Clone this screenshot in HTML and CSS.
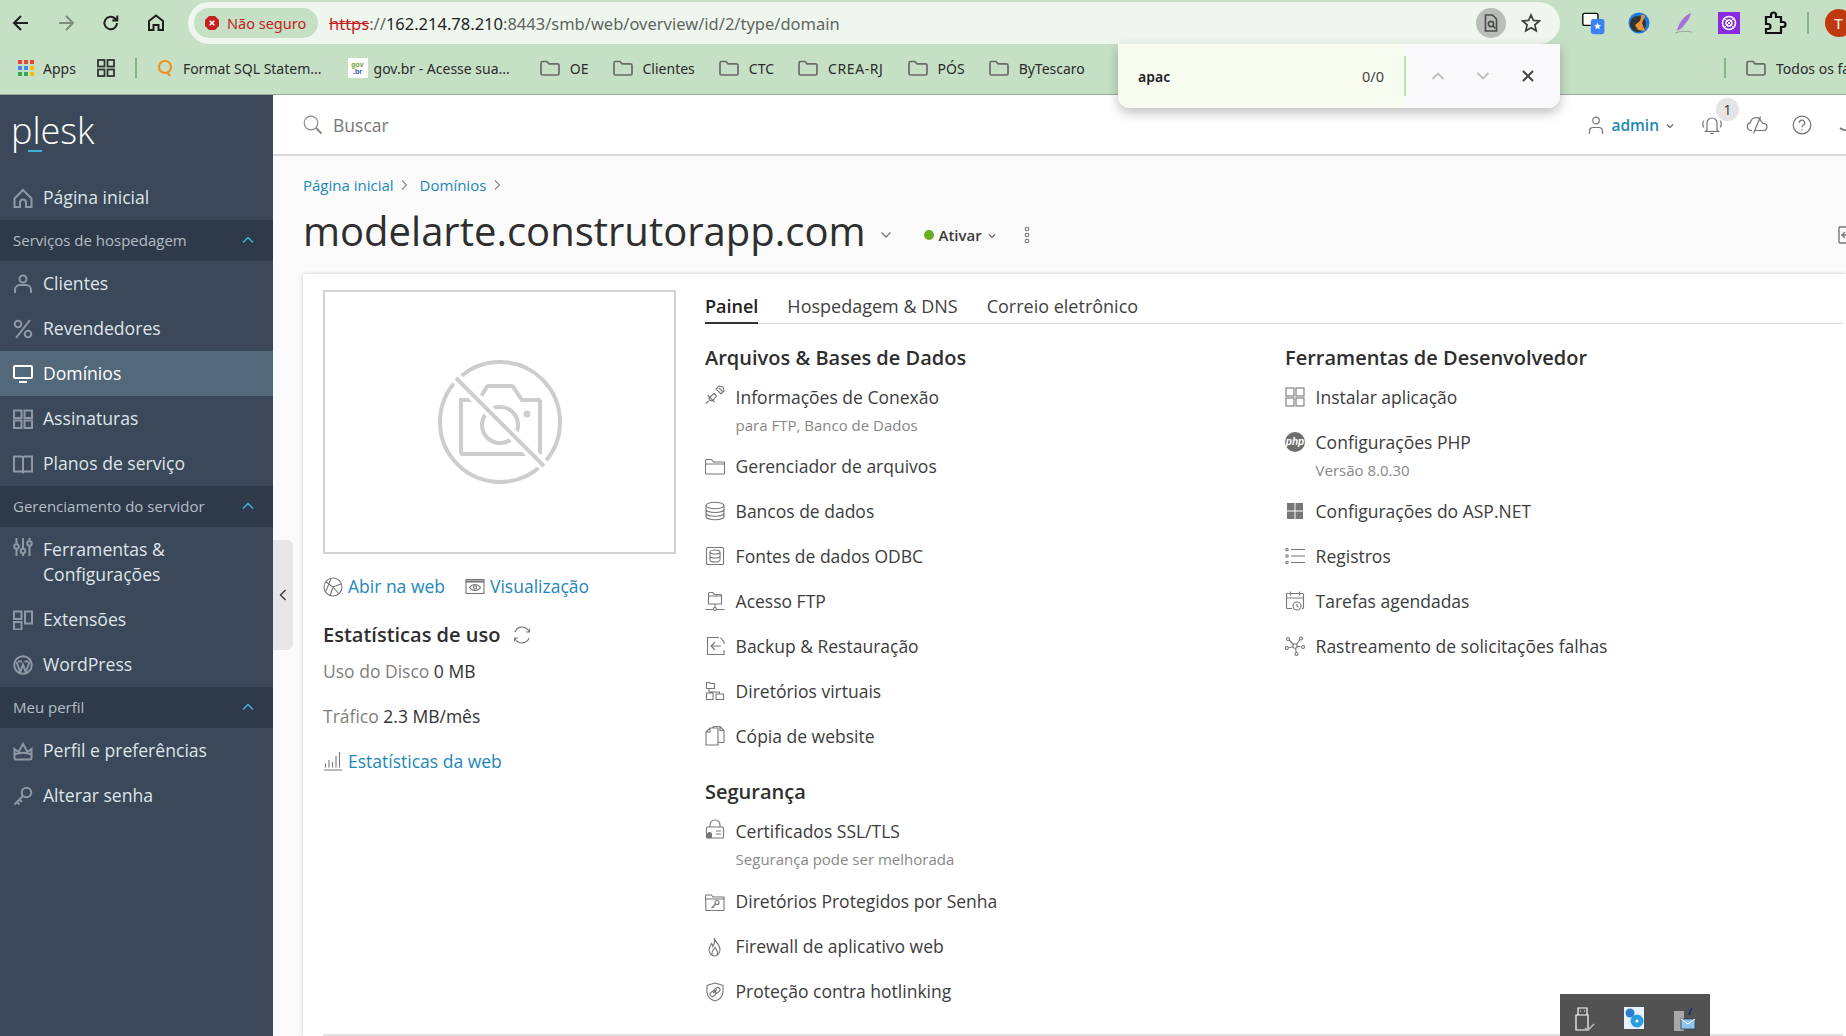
FILE: index.html
```html
<!DOCTYPE html>
<html lang="pt-BR">
<head>
<meta charset="utf-8">
<title>modelarte.construtorapp.com</title>
<link rel="stylesheet" href="styles.css">
</head>
<body>
<div class="browser">
  <div class="toolbar">
    <div class="navs">
      <span class="nav"><svg viewBox="0 0 20 20" class="navic"><path d="M17 10H3.5M10 3l-7 7 7 7"/></svg></span>
      <span class="nav dim"><svg viewBox="0 0 20 20" class="navic"><path d="M3 10h13.5M10 3l7 7-7 7"/></svg></span>
      <span class="nav"><svg viewBox="0 0 20 20" class="navic"><path d="M16 10a6.3 6.3 0 1 1-1.9-4.5L16 7.3M16.3 2.6v5h-5"/></svg></span>
      <span class="nav"><svg viewBox="0 0 20 20" class="navic"><path d="M3 17V8l7-5.5L17 8v9h-4.5v-5h-5v5z"/></svg></span>
    </div>
    <div class="omnibox">
      <span class="secure"><svg viewBox="0 0 16 16" class="secure-ic"><path d="M5 1h6l4 4v6l-4 4H5l-4-4V5z" fill="#c5221f"/><path d="M5.7 5.7l4.6 4.6M10.3 5.7l-4.6 4.6" stroke="#fff" stroke-width="1.6"/></svg>Não seguro</span>
      <span class="url"><s class="https">https</s><span class="urlsoft">://</span>162.214.78.210<span class="urlsoft">:8443/smb/web/overview/id/2/type/domain</span></span>
      <span class="omni-right">
        <span class="lens"><svg viewBox="0 0 20 20" class="lens-ic"><path d="M4.5 2h7l4 4v12h-11z"/><circle cx="10" cy="11" r="2.6"/><path d="M12 13l2.5 2.5"/></svg></span>
        <svg viewBox="0 0 20 20" class="star"><path d="M10 2l2.4 5.4 5.9.6-4.4 3.9 1.3 5.8-5.2-3-5.2 3 1.3-5.8L1.7 8l5.9-.6z"/></svg>
      </span>
    </div>
    <div class="exts">
      <span class="ext"><svg viewBox="0 0 30 30" class="ext-ic"><rect x="1" y="3" width="19" height="15" rx="2" fill="#fff" stroke="#111" stroke-width="1.8"/><rect x="11" y="10" width="17" height="19" rx="3" fill="#3b82f6"/><path d="M19.500 14.500l1.300 2.900 3.100.3-2.400 2 .8 3-2.800-1.600-2.800 1.600.8-3-2.400-2 3.100-.3z" fill="#fff"/></svg></span>
      <span class="ext"><svg viewBox="0 0 24 24" class="ext-ic"><circle cx="12" cy="12" r="10.5" fill="#1e78d6"/><circle cx="11" cy="13" r="8" fill="#333"/><path d="M15 3l3 2-3 7 3 8-7-1-3-5 5-4z" fill="#e8923a"/></svg></span>
      <span class="ext"><svg viewBox="0 0 24 24" class="ext-ic"><path d="M19 2C12 5 7 11 5 20c4-2 6-4 8-7 3-3 5-7 6-11z" fill="#a66fd8"/><path d="M3 22c5-2 12-2 17-1" stroke="#9aa89a" fill="none"/></svg></span>
      <span class="ext"><svg viewBox="0 0 24 24" class="ext-ic"><rect x="1" y="1" width="22" height="22" fill="#8a2be2"/><circle cx="12" cy="12" r="6.5" fill="none" stroke="#fff" stroke-width="1.6"/><circle cx="12" cy="12" r="3" fill="none" stroke="#fff" stroke-width="1.4"/><path d="M7 7l10 10M17 7L7 17" stroke="#fff"/></svg></span>
      <span class="ext"><svg viewBox="0 0 24 24" class="ext-ic"><path d="M4 6h5V4a2.5 2.500 0 0 1 5 0v2h5v5h2a2.500 2.500 0 0 1 0 5h-2v6H4v-4h2a2.500 2.500 0 0 0 0-5H4z" fill="none" stroke="#111" stroke-width="2.2"/></svg></span>
      <span class="tb-sep"></span>
      <span class="avatar">T</span>
    </div>
  </div>
  <div class="bookmarks">
    <div class="bm-main">
      <span class="bm bm-apps"><svg viewBox="0 0 18 18" class="apps-ic"><g class="apps-r"><rect x="1" y="1" width="4" height="4"/><rect x="7" y="1" width="4" height="4"/><rect x="13" y="1" width="4" height="4"/></g><g class="apps-b"><rect x="1" y="7" width="4" height="4"/><rect x="7" y="7" width="4" height="4"/></g><rect x="13" y="7" width="4" height="4" fill="#fbbc04"/><g class="apps-g"><rect x="1" y="13" width="4" height="4"/><rect x="7" y="13" width="4" height="4"/></g><rect x="13" y="13" width="4" height="4" fill="#fbbc04"/></svg>Apps</span>
      <svg viewBox="0 0 20 20" class="bm-grid"><rect x="2" y="2" width="6.5" height="6.5"/><rect x="11.5" y="2" width="6.5" height="6.5"/><rect x="2" y="11.5" width="6.5" height="6.5"/><rect x="11.5" y="11.5" width="6.5" height="6.5"/></svg>
      <span class="bm-sep"></span>
      <span class="bm bm-q"><svg viewBox="0 0 18 18" class="q-ic"><circle cx="9" cy="8" r="6"/><path d="M11 13l3 4"/></svg>Format SQL Statem...</span>
      <span class="bm bm-gov"><span class="gov"><b class="gov-a">gov</b><b class="gov-b">.br</b></span>gov.br - Acesse sua...</span>
      <span class="bm bm-folders">
        <span class="bm"><svg viewBox="0 0 20 20" class="folder"><use href="#fold"/></svg>OE</span>
        <span class="bm"><svg viewBox="0 0 20 20" class="folder"><use href="#fold"/></svg>Clientes</span>
        <span class="bm"><svg viewBox="0 0 20 20" class="folder"><use href="#fold"/></svg>CTC</span>
        <span class="bm bm-wide"><svg viewBox="0 0 20 20" class="folder"><use href="#fold"/></svg>CREA-RJ</span>
        <span class="bm"><svg viewBox="0 0 20 20" class="folder"><use href="#fold"/></svg>PÓS</span>
        <span class="bm"><svg viewBox="0 0 20 20" class="folder"><use href="#fold"/></svg>ByTescaro</span>
      </span>
    </div>
    <span class="bm-sep bm-sep2"></span>
    <span class="bm bm-other"><svg viewBox="0 0 20 20" class="folder"><use href="#fold"/></svg>Todos os favoritos</span>
  </div>
</div>

<svg class="defs" aria-hidden="true"><defs>
  <symbol id="fold" viewBox="0 0 20 20"><path d="M1 5a1.5 1.5 0 0 1 1.5-1.5h4.6L9 5.8h8.5A1.5 1.5 0 0 1 19 7.3v8.2a1.5 1.5 0 0 1-1.5 1.5h-15A1.5 1.5 0 0 1 1 15.5z"/></symbol>
</defs></svg>

<div class="app">
  <nav class="sidebar">
    <div class="logo"><span class="logo-text">plesk</span><span class="logo-bar"></span></div>
    <a class="s-item"><svg viewBox="0 0 20 20" class="s-ic"><path d="M1.5 10.5L10 2l8.5 8.5V19H13v-4.5a3 3 0 0 0-6 0V19H1.5z"/></svg>Página inicial</a>
    <div class="s-group">Serviços de hospedagem<svg viewBox="0 0 12 8" class="s-chev"><path d="M1 6.5l5-5 5 5"/></svg></div>
    <a class="s-item"><svg viewBox="0 0 20 20" class="s-ic"><circle cx="10" cy="5" r="3.5"/><path d="M2 19v-3a5 5 0 0 1 5-5h6a5 5 0 0 1 5 5v3"/></svg>Clientes</a>
    <a class="s-item"><svg viewBox="0 0 20 20" class="s-ic"><circle cx="5" cy="5" r="3.3"/><circle cx="15" cy="15" r="3.3"/><path d="M17 1L3 19"/></svg>Revendedores</a>
    <a class="s-item active"><svg viewBox="0 0 20 20" class="s-ic"><rect x="1" y="2" width="18" height="12" rx="1"/><path d="M6 18h8"/></svg>Domínios</a>
    <a class="s-item"><svg viewBox="0 0 20 20" class="s-ic"><rect x="1" y="1.5" width="7.5" height="7.5"/><rect x="11.5" y="1.5" width="7.5" height="7.5"/><rect x="1" y="11.5" width="7.5" height="7.5"/><rect x="11.5" y="11.5" width="7.5" height="7.5"/></svg>Assinaturas</a>
    <a class="s-item"><svg viewBox="0 0 20 20" class="s-ic"><path d="M1 2.5h7.5l1.5 1 1.5-1H19v15h-7.5L10 18.5l-1.500-1H1zM10 3.500v15"/></svg>Planos de serviço</a>
    <div class="s-group">Gerenciamento do servidor<svg viewBox="0 0 12 8" class="s-chev"><path d="M1 6.5l5-5 5 5"/></svg></div>
    <a class="s-item s-top"><svg viewBox="0 0 20 20" class="s-ic"><path d="M3.500 1v6M3.500 12v7M10 1v11M10 16v3M16.500 1v3M16.500 9v10"/><circle cx="3.500" cy="9.500" r="2.300"/><circle cx="10" cy="14" r="2.300"/><circle cx="16.500" cy="6.500" r="2.300"/></svg><span>Ferramentas &amp;<br>Configurações</span></a>
    <a class="s-item"><svg viewBox="0 0 20 20" class="s-ic"><rect x="1" y="1.500" width="7.500" height="7.500"/><rect x="1" y="12" width="7.500" height="7.500"/><rect x="12" y="1.500" width="7" height="12"/></svg>Extensões</a>
    <a class="s-item"><svg viewBox="0 0 20 20" class="s-ic"><circle cx="10" cy="10" r="8.800"/><path d="M3.500 7l3.800 10L10 9.500 12.700 17l3.800-10M5 6.500h4M11.500 6.500h4" /></svg>WordPress</a>
    <div class="s-group">Meu perfil<svg viewBox="0 0 12 8" class="s-chev"><path d="M1 6.500l5-5 5 5"/></svg></div>
    <a class="s-item"><svg viewBox="0 0 20 20" class="s-ic"><path d="M1.500 8l4 3L10 3l4.500 8 4-3v9.500a1 1 0 0 1-1 1h-15a1 1 0 0 1-1-1zM1.500 13.500c5-2 12-2 17 0"/></svg>Perfil e preferências</a>
    <a class="s-item"><svg viewBox="0 0 20 20" class="s-ic"><circle cx="13.500" cy="6.500" r="4.800"/><path d="M10 10L1.500 18.500M4 16l2.500 2.500M6.500 13.500L9 16"/></svg>Alterar senha</a>
  </nav>

  <main class="main">
    <header class="topbar">
      <div class="search"><svg viewBox="0 0 20 20" class="search-ic"><circle cx="8" cy="8" r="6.800"/><path d="M13 13l5.500 5.500" stroke-width="2"/></svg>Buscar</div>
      <div class="top-right">
        <svg viewBox="0 0 16 18" class="user-ic"><circle cx="8" cy="4.500" r="3.300"/><path d="M1.500 18v-3a3.500 3.500 0 0 1 3.500-3.500h6a3.500 3.500 0 0 1 3.500 3.500v3"/></svg>
        <span class="admin">admin</span>
        <svg viewBox="0 0 8 6" class="mini-caret"><path d="M1 1.500l3 3 3-3"/></svg>
        <span class="tool bell"><svg viewBox="0 0 22 20" class="tool-ic"><path d="M6 15V8a5 5 0 0 1 10 0v7l1.500 1.500h-13zM9 18.500h4M3 5.500c-1.500 2-1.500 5 0 7M19 5.500c1.500 2 1.500 5 0 7"/></svg><span class="badge">1</span></span>
        <span class="tool"><svg viewBox="0 0 22 20" class="tool-ic"><path d="M6 15.500H5A4 4 0 0 1 4.500 7.600 5.500 5.500 0 0 1 15 6l2 2.500h.500a3.500 3.500 0 0 1 0 7H8M14.500 1.500L7.500 18.500"/></svg></span>
        <span class="tool"><svg viewBox="0 0 20 20" class="tool-ic"><circle cx="10" cy="10" r="8.800"/><path d="M7.300 7.800a2.700 2.700 0 1 1 4 2.400c-.8.500-1.300 1-1.300 2.100M10 14.200v1.400"/></svg></span>
        <span class="tool"><svg viewBox="0 0 20 20" class="tool-ic"><path d="M3 13c4 3 10 3 14 0" stroke-width="1.600"/></svg></span>
      </div>
    </header>

    <div class="crumbs"><a class="link">Página inicial</a><svg viewBox="0 0 8 12" class="crumb-sep"><path d="M2 1.500l4.500 4.500L2 10.500"/></svg><a class="link">Domínios</a><svg viewBox="0 0 8 12" class="crumb-sep"><path d="M2 1.500l4.500 4.500L2 10.500"/></svg></div>

    <div class="titlerow">
      <h1 class="title">modelarte.construtorapp.com</h1>
      <svg viewBox="0 0 12 8" class="title-caret"><path d="M1.500 1.500L6 6l4.500-4.500"/></svg>
      <span class="dot"></span><span class="status">Ativar</span>
      <svg viewBox="0 0 8 6" class="status-caret"><path d="M1 1.500l3 3 3-3"/></svg>
      <svg viewBox="0 0 6 18" class="kebab"><circle cx="3" cy="3" r="1.800"/><circle cx="3" cy="9" r="1.800"/><circle cx="3" cy="15" r="1.800"/></svg>
      <svg viewBox="0 0 20 18" class="title-end"><rect x="1" y="1" width="18" height="16" rx="1"/><path d="M10 9H4M7 6L4 9l3 3"/></svg>
    </div>

    <section class="card">
      <aside class="left">
        <div class="shot"><svg viewBox="0 0 126 126" class="shot-ic">
          <circle cx="63" cy="63" r="60"/>
          <path d="M24 41h18l7-12a3 3 0 0 1 3-2h22a3 3 0 0 1 3 2l8 12h16a2 2 0 0 1 2 2v50a2 2 0 0 1-2 2H26a2 2 0 0 1-2-2z"/>
          <circle cx="63" cy="66" r="18"/>
          <circle cx="90" cy="55" r="1.500"/>
          <path class="shot-gap" d="M19 19l88 88"/>
          <path d="M19 19l88 88"/>
        </svg></div>
        <div class="links">
          <a class="link-ic"><svg viewBox="0 0 20 20" class="ic"><circle cx="10" cy="10" r="9"/><path d="M3 5l7 5 8-3M10 10l-3 9M10 10l6 7M8 1.500L3 14"/></svg><span class="link">Abir na web</span></a>
          <a class="link-ic"><svg viewBox="0 0 20 20" class="ic"><rect x="1" y="2.500" width="18" height="14"/><path d="M1 4.500h18" stroke-width="2.200"/><path d="M4.500 10.500c3-4 8-4 11 0-3 4-8 4-11 0z"/><circle cx="10" cy="10.500" r="1.600"/></svg><span class="link">Visualização</span></a>
        </div>
        <h2 class="stats-h">Estatísticas de uso<svg viewBox="0 0 20 20" class="ic refresh"><path d="M3 7a7.500 7.500 0 0 1 13-2l1.500 2M17 13a7.500 7.500 0 0 1-13 2l-1.500-2M17.500 3.500V7H14M2.500 16.500V13H6"/></svg></h2>
        <p class="stat"><span class="stat-k">Uso do Disco</span> 0 MB</p>
        <p class="stat"><span class="stat-k">Tráfico</span> 2.3 MB/mês</p>
        <a class="link-ic stat-web"><svg viewBox="0 0 20 20" class="ic"><path d="M1 19h18M2.500 16.500v-4M6 16.500V9M9.500 16.500V11M13 16.500V5M16.500 16.500V1"/></svg><span class="link">Estatísticas da web</span></a>
      </aside>

      <div class="right">
        <div class="tabs"><span class="tab on">Painel</span><span class="tab">Hospedagem &amp; DNS</span><span class="tab">Correio eletrônico</span></div>
        <div class="cols">
          <div class="col">
            <h3 class="sec">Arquivos &amp; Bases de Dados</h3>
            <div class="row sub-row"><svg viewBox="0 0 20 20" class="ic"><path d="M5 12l4-3.500 2.500 2.500-3.500 4a2.500 2.500 0 0 1-3.500 0 2.500 2.500 0 0 1 0-3zM.8 18.500l3-2.500M2.500 10l7 7M11 4l3-3 4 1 1 4-3 3zM14 3l3.500 3.500"/></svg><div><div>Informações de Conexão</div><div class="sub">para FTP, Banco de Dados</div></div></div>
            <div class="row"><svg viewBox="0 0 20 20" class="ic"><path d="M.500 4.500a1 1 0 0 1 1-1h5l2 2.500h10a1 1 0 0 1 1 1v10a1 1 0 0 1-1 1h-17a1 1 0 0 1-1-1zM.500 8h19"/></svg>Gerenciador de arquivos</div>
            <div class="row"><svg viewBox="0 0 20 20" class="ic"><ellipse cx="10" cy="4.500" rx="9" ry="3.200"/><path d="M1 4.500v11c0 1.800 4 3.200 9 3.200s9-1.400 9-3.200v-11M1 8.300c0 1.800 4 3.200 9 3.200s9-1.400 9-3.200M1 12c0 1.800 4 3.200 9 3.200s9-1.400 9-3.200"/></svg>Bancos de dados</div>
            <div class="row"><svg viewBox="0 0 20 20" class="ic"><rect x="1.500" y="1.500" width="17" height="17" rx="1"/><ellipse cx="10" cy="6" rx="5" ry="2"/><path d="M5 6v8c0 1.100 2.200 2 5 2s5-.9 5-2V6M5 10c0 1.100 2.200 2 5 2s5-.9 5-2"/></svg>Fontes de dados ODBC</div>
            <div class="row"><svg viewBox="0 0 20 20" class="ic"><path d="M3.500 13V2.500a1 1 0 0 1 1-1h3.500l1.500 2h6a1 1 0 0 1 1 1V13zM3.500 5h13M10 13v4M.500 18.500h7.500M12 18.500h7.500"/><circle cx="10" cy="18" r="1.500"/></svg>Acesso FTP</div>
            <div class="row"><svg viewBox="0 0 20 20" class="ic"><path d="M14 1.500H2.500v17H19V14M19 8V6l-3.500-4.500M16 10H6.500M10 6l-4 4 4 4"/></svg>Backup &amp; Restauração</div>
            <div class="row"><svg viewBox="0 0 20 20" class="ic"><path d="M1.500 1.500h3l1 1h4v5h-8zM4 7.500V11M1.500 12h6.500v6.500H1.500zM11 13h7.500v5.500H11zM4 11h10.500v2"/></svg>Diretórios virtuais</div>
            <div class="row"><svg viewBox="0 0 20 20" class="ic"><path d="M1 6l4-4h8v17H1zM1 6h4V2M7 2l2-1.500h6l4 4v11a1 1 0 0 1-1 1h-5M15 .5v4h4"/></svg>Cópia de website</div>
            <h3 class="sec sec2">Segurança</h3>
            <div class="row sub-row sub-row-tall"><svg viewBox="0 0 20 20" class="ic"><path d="M5 8V6a5 5 0 0 1 10 0v2M2.500 8h15a1 1 0 0 1 1 1v9a1 1 0 0 1-1 1H2.500a1 1 0 0 1-1-1V9a1 1 0 0 1 1-1zM11 12h5M11 15h5"/><circle cx="4.500" cy="15.500" r="2.500" class="fill"/><rect x="1" y="15.500" width="6" height="3.500" class="fill"/></svg><div><div>Certificados SSL/TLS</div><div class="sub">Segurança pode ser melhorada</div></div></div>
            <div class="row"><svg viewBox="0 0 20 20" class="ic"><path d="M.500 4a1 1 0 0 1 1-1h5l1.500 2h11v12.500a1 1 0 0 1-1 1h-17zM.500 7h19"/><circle cx="12" cy="10.500" r="2"/><path d="M10.500 12L6.500 16M8 14.500l1.200 1.200"/></svg>Diretórios Protegidos por Senha</div>
            <div class="row"><svg viewBox="0 0 20 20" class="ic"><path d="M9 1c1 4 6 6 6 11.500a5.500 6.500 0 0 1-11 0c0-3 2-4 2.500-6 1 1 1.500 2 1.500 3C9.500 7 10 4 9 1zM7.500 18c-2-3 1-5 2.500-7.500 1.500 2.500 4 5 2 7.500"/></svg>Firewall de aplicativo web</div>
            <div class="row"><svg viewBox="0 0 20 20" class="ic"><path d="M10 1l8 2.500v6c0 4.500-3 8-8 9.500-5-1.500-8-5-8-9.500v-6zM8 11l4-3.500"/><rect x="4.800" y="9.500" width="6.500" height="4.400" rx="2.200" transform="rotate(-40 8 11.700)"/><rect x="8.700" y="6.200" width="6.500" height="4.400" rx="2.200" transform="rotate(-40 12 8.400)"/></svg>Proteção contra hotlinking</div>
          </div>
          <div class="col">
            <h3 class="sec">Ferramentas de Desenvolvedor</h3>
            <div class="row"><svg viewBox="0 0 20 20" class="ic"><rect x="1" y="1" width="8" height="8"/><rect x="11" y="1" width="8" height="8"/><rect x="1" y="11" width="8" height="8"/><rect x="11" y="11" width="8" height="8"/></svg>Instalar aplicação</div>
            <div class="row sub-row"><span class="php">php</span><div><div>Configurações PHP</div><div class="sub">Versão 8.0.30</div></div></div>
            <div class="row"><svg viewBox="0 0 20 20" class="ic"><rect x="2" y="2" width="7.500" height="7.500" class="fill"/><rect x="10.500" y="2" width="7.500" height="7.500" class="fill"/><rect x="2" y="10.500" width="7.500" height="7.500" class="fill"/><rect x="10.500" y="10.500" width="7.500" height="7.500" class="fill"/></svg>Configurações do ASP.NET</div>
            <div class="row"><svg viewBox="0 0 20 20" class="ic"><circle cx="2" cy="3.500" r="1.200"/><circle cx="2" cy="10" r="1.200"/><circle cx="2" cy="16.500" r="1.200"/><path d="M6 3.500h14M6 10h14M6 16.500h14"/></svg>Registros</div>
            <div class="row"><svg viewBox="0 0 20 20" class="ic"><path d="M7 17.500H2.500a1 1 0 0 1-1-1V3.500a1 1 0 0 1 1-1h15a1 1 0 0 1 1 1v13a1 1 0 0 1-1 1H17M1.500 7h17M5.500 .5v4M14.500 .5v4"/><circle cx="12" cy="15" r="4"/><path d="M12 13v2.200l1.500 1"/></svg>Tarefas agendadas</div>
            <div class="row"><svg viewBox="0 0 20 20" class="ic"><circle cx="10" cy="10" r="2.200"/><circle cx="3" cy="3" r="1.500"/><circle cx="16" cy="2.500" r="1.500"/><circle cx="1.800" cy="12" r="1.500"/><circle cx="18" cy="11" r="1.500"/><circle cx="11.500" cy="18" r="1.500"/><path d="M4 4l4.500 4.500M15 3.500l-3.500 5M3.300 11.700l4.600-1M15.500 10.500h-3.300M10.500 12l.8 4.500"/></svg>Rastreamento de solicitações falhas</div>
          </div>
        </div>
        </div>
      <div class="card-rule"></div>
    </section>

    <button class="collapse"><svg viewBox="0 0 8 12" class="collapse-ic"><path d="M6.500 1L1.500 6l5 5"/></svg></button>
  </main>
</div>

<div class="findbar">
  <span class="find-q">apac</span>
  <span class="find-n">0/0</span>
  <span class="find-sep"></span>
  <svg viewBox="0 0 14 10" class="find-btn"><path d="M1.500 8L7 2.500 12.500 8"/></svg>
  <svg viewBox="0 0 14 10" class="find-btn"><path d="M1.500 2L7 7.500 12.500 2"/></svg>
  <svg viewBox="0 0 14 14" class="find-x"><path d="M2 2l10 10M12 2L2 12"/></svg>
</div>

<div class="tray">
  <svg viewBox="0 0 24 26" class="tray-ic"><path d="M6 3h9v7H6zM4 10h12v15H4z" fill="none" stroke="#fff" stroke-width="1.200"/><path d="M8 6h1M12 6h1" stroke="#fff"/><path d="M13 23l3 2 6-6" fill="none" stroke="#bbb" stroke-width="1.500"/></svg>
  <svg viewBox="0 0 24 26" class="tray-ic"><rect x="2" y="2" width="20" height="22" fill="#e8f4fb"/><circle cx="8" cy="8" r="4.500" fill="#2c7fd0"/><circle cx="15" cy="16" r="6.500" fill="#2aa0e0"/><circle cx="15" cy="16" r="1.500" fill="#fff"/></svg>
  <svg viewBox="0 0 24 26" class="tray-ic"><rect x="2" y="6" width="10" height="20" fill="#a8a8a8"/><rect x="9" y="14" width="14" height="10" fill="#8dc1ee" stroke="#345" stroke-width=".8"/><path d="M9 14l7 5 7-5" fill="none" stroke="#fff"/><path d="M17 10c1-4 2-6 3-7" stroke="#1a2a7a" stroke-width="1.600" fill="none"/></svg>
</div>
</body>
</html>
```

FILE: styles.css
```css
* { box-sizing: border-box; }
html, body { margin: 0; height: 100%; overflow: hidden; }
body { width: 1846px; height: 1036px; background: #fafafa; font-family: "Open Sans", sans-serif; color: #3a3a3a; position: relative; }
a { text-decoration: none; }
h1, h2, h3, p { margin: 0; font-weight: inherit; }
.defs { position: absolute; width: 0; height: 0; }

/* browser chrome */
.browser { height: 95px; background: #c5e0c5; border-bottom: 1px solid #98ad98; font-family: "Noto Sans", sans-serif; }
.toolbar { height: 44px; display: flex; align-items: flex-start; padding-top: 2px; }
.navs { display: flex; margin-left: -2px; width: 190px; flex: none; height: 42px; align-items: center; }
.nav { width: 45px; display: flex; justify-content: center; color: #1f1f1f; }
.nav.dim { color: #7d8c7d; }
.navic { width: 20px; height: 20px; fill: none; stroke: currentColor; stroke-width: 2; }
.omnibox { width: 1372px; flex: none; height: 42px; border-radius: 21px; background: #eef6ee; display: flex; align-items: center; padding-left: 6px; }
.secure { width: 124px; height: 30px; border-radius: 15px; background: #c5e0c5; color: #c5221f; font-size: 14.500px; display: flex; align-items: center; padding-left: 10px; gap: 7px; white-space: nowrap; }
.secure-ic { width: 16px; height: 16px; flex: none; }
.url { margin-left: 11px; font-size: 16.500px; color: #1f1f1f; white-space: nowrap; }
.https { color: #c5221f; }
.urlsoft { color: #5f665f; }
.omni-right { margin-left: auto; display: flex; align-items: center; gap: 15px; padding-right: 19px; }
.lens { width: 30px; height: 30px; border-radius: 50%; background: #b8bdb8; display: flex; align-items: center; justify-content: center; }
.lens-ic { width: 20px; height: 20px; fill: none; stroke: #4c4c4c; stroke-width: 1.600; }
.star { width: 20px; height: 20px; fill: none; stroke: #3f3f3f; stroke-width: 1.700; }
.exts { display: flex; align-items: center; height: 42px; margin-left: 11.500px; flex: none; }
.ext { width: 45px; display: flex; justify-content: center; }
.ext-ic { width: 24px; height: 24px; overflow: visible; }
.tb-sep { width: 2px; height: 22px; background: #86b486; margin-left: 10px; }
.avatar { width: 28px; height: 28px; border-radius: 50%; background: #c0390f; color: #fff; font-size: 15px; display: flex; align-items: center; justify-content: center; margin-left: 16px; flex: none; }

.bookmarks { height: 50px; padding-bottom: 2px; display: flex; align-items: center; font-size: 14px; color: #2b2b2b; white-space: nowrap; overflow: hidden; }
.bm-main { width: 1724px; flex: none; display: flex; align-items: center; }
.bm { display: inline-flex; align-items: center; gap: 10px; }
.apps-ic { width: 18px; height: 18px; }
.apps-r { fill: #ea4335; }
.apps-b { fill: #4285f4; }
.apps-g { fill: #34a853; }
.bm-apps { margin-left: 17px; gap: 8px; }
.bm-grid { width: 20px; height: 20px; fill: none; stroke: #333; stroke-width: 1.800; margin-left: 20px; }
.bm-sep { width: 2px; height: 20px; background: #86b486; flex: none; margin-left: 19px; }
.q-ic { width: 18px; height: 18px; fill: none; stroke: #f09020; stroke-width: 2.200; }
.bm-q { margin-left: 19px; gap: 9px; }
.bm-gov { margin-left: 26px; gap: 6px; }
.gov { width: 20px; height: 20px; background: #fff; display: flex; flex-direction: column; align-items: center; justify-content: center; font-family: "Liberation Sans", sans-serif; font-size: 7px; line-height: 7px; }
.gov-a { color: #6f9e2b; }
.gov-b { color: #2a5aa8; }
.bm-folders { gap: 24px; margin-left: 30px; }
.bm-wide { letter-spacing: .6px; }
.folder { width: 20px; height: 20px; fill: none; stroke: #6a6a6a; stroke-width: 1.700; flex: none; }
.bm-sep2 { margin-left: 0; }
.bm-other { margin-left: 20px; }

/* app shell */
.app { display: flex; height: 941px; position: relative; }
.sidebar { width: 273px; flex: none; background: #3a4859; color: #e6eaee; }
.logo { height: 80px; position: relative; padding: 13px 0 0 11px; }
.logo-text { font-size: 36px; font-weight: 300; color: #fff; line-height: 46px; display: block; }
.logo-bar { position: absolute; left: 28px; top: 55px; width: 14px; height: 2px; background: #3fb2dd; }
.s-item { display: flex; align-items: center; gap: 10px; height: 45px; padding-left: 13px; font-size: 17.600px; line-height: 25px; color: #dfe4e9; }
.s-item.s-top { height: 70px; align-items: flex-start; padding-top: 10px; }
.s-item.active { background: #536879; color: #fff; }
.s-ic { width: 20px; height: 20px; flex: none; fill: none; stroke: #8d98a4; stroke-width: 2; }
.active .s-ic { stroke: #fff; }
.s-group { height: 41px; padding: 0 19px 2px 13px; background: #2e3a49; display: flex; align-items: center; justify-content: space-between; font-size: 15px; color: #b4bdc6; }
.s-chev { width: 12px; height: 8px; fill: none; stroke: #3fb2dd; stroke-width: 1.500; }

.main { flex: 1; min-width: 0; overflow: hidden; position: relative; background: #fafafa; }
.topbar { height: 61px; padding: 1px 0 0 29px; background: #fff; border-bottom: 2px solid #d8d8d8; display: flex; align-items: center; }
.search { display: flex; align-items: center; gap: 10px; font-size: 17.500px; color: #777; }
.search-ic { width: 20px; height: 20px; fill: none; stroke: #8a8a8a; stroke-width: 1.200; margin-left: 1px; }
.top-right { margin-left: auto; margin-right: -23px; display: flex; align-items: center; }
.user-ic { width: 16px; height: 18px; fill: none; stroke: #777; stroke-width: 1.200; margin-right: 7px; }
.admin { font-size: 15.500px; font-weight: 600; color: #1c88b8; }
.mini-caret { width: 8px; height: 6px; fill: none; stroke: #666; stroke-width: 1.200; margin: 2px 0 0 7px; }
.tool { width: 45px; display: flex; justify-content: center; position: relative; }
.bell { margin-left: 15px; }
.tool-ic { width: 22px; height: 20px; fill: none; stroke: #737373; stroke-width: 1.200; }
.badge { position: absolute; top: -17px; left: 27px; width: 23px; height: 23px; border-radius: 50%; background: #e4e4e4; font-size: 14px; color: #333; display: flex; align-items: center; justify-content: center; }

.crumbs { height: 25px; margin: 16px 0 0 30px; display: flex; align-items: center; gap: 6.500px; font-size: 15px; }
.link { color: #1c88b8; }
.crumb-sep { width: 8px; height: 12px; fill: none; stroke: #8a8a8a; stroke-width: 1.100; margin-right: 5px; }
.titlerow { height: 54px; margin: 8px 0 0 30px; display: flex; align-items: center; }
.title { font-size: 40px; line-height: 54px; font-weight: 400; color: #2e2e2e; white-space: nowrap; margin-top: -3px; }
.title-caret { width: 12px; height: 8px; fill: none; stroke: #777; stroke-width: 1.300; margin: 6px 0 0 15px; }
.dot { width: 10px; height: 10px; border-radius: 50%; background: #6aae20; margin: 6px 0 0 32px; }
.status { font-size: 15px; font-weight: 600; color: #3a3a3a; margin: 6px 0 0 4px; }
.status-caret { width: 8px; height: 6px; fill: none; stroke: #666; stroke-width: 1.200; margin: 7px 0 0 6px; }
.kebab { width: 6px; height: 18px; fill: none; stroke: #777; stroke-width: 1.100; margin: 6px 0 0 28px; }
.title-end { width: 20px; height: 18px; flex: none; margin: 6px 0 0 auto; transform: translateX(12px); fill: none; stroke: #777; stroke-width: 1.400; }

.card { margin: 15px 0 0 30px; padding: 16px 3px 0 20px; background: #fff; box-shadow: 0 0 4px rgba(0,0,0,.2); display: grid; grid-template-columns: 353px 1fr; column-gap: 29px; }
.left { font-size: 17.500px; }
.shot { height: 264px; border: 2px solid #d2d2d2; display: flex; align-items: center; justify-content: center; }
.shot-ic { width: 126px; height: 126px; fill: none; stroke: #cdcdcd; stroke-width: 4; }
.shot-gap { stroke: #fff; stroke-width: 11; }
.links { display: flex; gap: 20px; margin-top: 20px; line-height: 25px; }
.link-ic { display: flex; align-items: center; gap: 5px; }
.ic { width: 20px; height: 20px; flex: none; fill: none; stroke: #777; stroke-width: 1.100; }
.ic .fill { fill: #777; stroke: none; }
.stats-h { margin-top: 23px; font-size: 20px; line-height: 26px; font-weight: 600; color: #2e2e2e; display: flex; align-items: center; }
.refresh { margin-left: 12px; }
.stat { line-height: 25px; margin-top: 20px; color: #333; }
.stats-h + .stat { margin-top: 10.500px; }
.stat-k { color: #808080; }
.stat-web { margin-top: 20px; line-height: 25px; }

.tabs { height: 34px; display: flex; gap: 29px; font-size: 18px; border-bottom: 1px solid #dcdcdc; line-height: 32px; white-space: nowrap; }
.tab { color: #3f3f3f; }
.tab.on { color: #222; font-weight: 600; border-bottom: 2px solid #333; height: 34px; }
.cols { display: grid; grid-template-columns: 580px 1fr; padding-top: 21px; }
.sec { font-size: 20px; line-height: 26px; font-weight: 600; color: #2e2e2e; margin-bottom: 3.500px; white-space: nowrap; }
.sec2 { margin-top: 20.500px; }
.row { display: flex; align-items: center; gap: 10.600px; padding: 10px 0; min-height: 45px; font-size: 17.500px; line-height: 25px; color: #3c3c3c; white-space: nowrap; }
.row.sub-row { align-items: flex-start; padding-bottom: 7px; }
.row.sub-row-tall { padding-bottom: 8.500px; }
.sub { margin-top: 3px; font-size: 15px; line-height: 24px; color: #888; }
.php { width: 20px; height: 20px; border-radius: 50%; background: #6e6e6e; color: #fff; font: italic 700 10px/20px "Liberation Sans", sans-serif; text-align: center; flex: none; margin-top: 2px; }
.card-rule { grid-column: 1 / -1; height: 2px; margin-top: 20px; background: #e2e2e2; }

.collapse { position: absolute; left: 0; top: 445px; width: 20px; height: 110px; border: 0; padding: 0; background: #e6e6e6; border-radius: 0 6px 6px 0; display: flex; align-items: center; justify-content: center; }
.collapse-ic { width: 8px; height: 12px; fill: none; stroke: #333; stroke-width: 1.300; }

/* overlays */
.findbar { position: absolute; left: 1118px; top: 44px; width: 442px; height: 64px; border-radius: 0 0 12px 12px; background: linear-gradient(90deg, #f8fbef 0, #f8fbef 65%, #f9f9fb 65%); box-shadow: 0 5px 12px rgba(0,0,0,.25); display: flex; align-items: center; padding-left: 20px; font-family: "Noto Sans", sans-serif; font-size: 14px; color: #222; }
.find-q { font-weight: 600; width: 224px; }
.find-n { width: 42px; color: #444; font-size: 14.500px; }
.find-sep { width: 2px; height: 40px; background: #b0e8b0; }
.find-btn { width: 14px; height: 10px; margin-left: 25px; fill: none; stroke: #bdbdbd; stroke-width: 1.800; }
.find-btn + .find-btn { margin-left: 31px; }
.find-x { width: 14px; height: 14px; margin-left: 31px; fill: none; stroke: #444; stroke-width: 2; }
.tray { position: absolute; left: 1560px; top: 994px; width: 150px; height: 42px; background: #525252; display: flex; align-items: center; gap: 26px; padding: 6px 0 0 12px; }
.tray-ic { width: 24px; height: 26px; }
```
